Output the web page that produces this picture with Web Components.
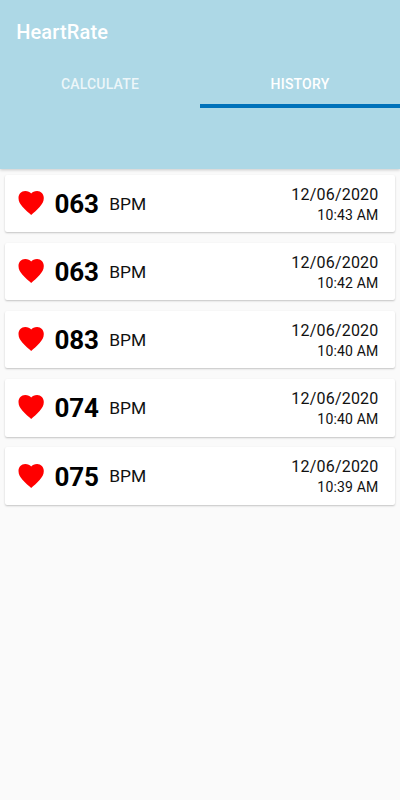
<!DOCTYPE html>
<html lang="en">
<head>
<meta charset="utf-8">
<title>HeartRate</title>
<style>
body{margin:0;background:#fafafa;font-family:Roboto,sans-serif;height:800px;overflow:hidden}
</style>
</head>
<body>
<heart-app></heart-app>
<script>
const define=(name,html)=>customElements.define(name,class extends HTMLElement{
  constructor(){super();this.attachShadow({mode:'open'}).innerHTML=html;}
});
define('heart-icon',`<style>:host{display:block;width:26px;height:24px;margin-bottom:.9px}svg{display:block;width:100%;height:100%}</style>
<svg viewBox="0 0 26 24"><path fill="#f00" d="M13.2 24C11 22 7.4 19.2 4.7 16C2.1 13.1.5 10.5.5 7.1C.5 3.1 3.3.1 7.2.1C9.9.1 12 1 13.2 2.6C14.4 1 16.3.1 19.1.1C22.9.1 25.8 3.1 25.8 7.1C25.8 10.5 24.2 13.1 21.6 16C18.9 19.2 15.4 22 13.2 24Z"/></svg>`);
define('tab-item',`<style>:host{flex:1;height:48px;box-sizing:border-box;display:flex;align-items:center;justify-content:center;padding-top:4px;font-size:14px;font-weight:500;letter-spacing:.2px;line-height:16px;color:rgba(255,255,255,.78);border-bottom:4px solid transparent}
:host([active]){color:#fff;border-bottom-color:#0072ba}</style><slot></slot>`);
define('app-header',`<style>:host{display:block;height:169px;background:#add8e6;box-shadow:0 1px 3px rgba(0,0,0,.2)}
.title{height:60px;box-sizing:border-box;padding:20px 0 0 16.2px;font-size:20px;line-height:24px;font-weight:500;letter-spacing:.14px;color:#fff}
.tabs{display:flex}</style><div class="title"><slot name="title"></slot></div><div class="tabs"><slot></slot></div>`);
define('reading-card',`<style>:host{display:flex;align-items:center;height:57.3px;box-sizing:border-box;padding:0 16.5px 0 13px;background:#fff;border-radius:2px;box-shadow:0 1px 2px rgba(0,0,0,.22)}
.rate{margin-left:10.5px;font-size:26px;font-weight:700;letter-spacing:-.2px;line-height:30px;padding-top:1px;color:#000}
.unit{margin-left:10.5px;font-size:17.4px;line-height:20px;color:#111}
.when{margin-left:auto;text-align:right;color:#111;padding-top:2px}
.date{font-size:16px;line-height:20px;letter-spacing:.2px}.time{font-size:14px;line-height:20px;letter-spacing:.18px}</style>
<heart-icon></heart-icon><div class="rate"><slot name="rate"></slot></div><div class="unit">BPM</div>
<div class="when"><div class="date"><slot name="date"></slot></div><div class="time"><slot name="time"></slot></div></div>`);
define('reading-list',`<style>:host{display:grid;gap:10.8px;padding:6px 5px}</style><slot></slot>`);
const readings=[['063','10:43 AM'],['063','10:42 AM'],['083','10:40 AM'],['074','10:40 AM'],['075','10:39 AM']];
define('heart-app',`<style>:host{display:block}</style>
<app-header><span slot="title">HeartRate</span><tab-item>CALCULATE</tab-item><tab-item active>HISTORY</tab-item></app-header>
<reading-list>${readings.map(([r,t])=>`<reading-card><span slot="rate">${r}</span><span slot="date">12/06/2020</span><span slot="time">${t}</span></reading-card>`).join('')}</reading-list>`);
</script>
</body>
</html>
